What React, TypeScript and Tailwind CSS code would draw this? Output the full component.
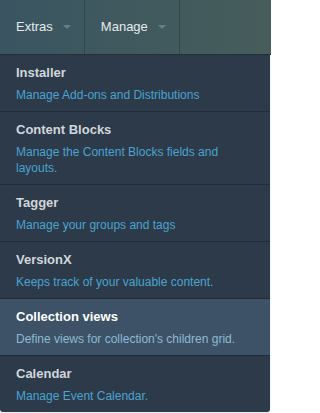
import React from 'react'

const items = [
  { title: 'Installer', desc: 'Manage Add-ons and Distributions' },
  { title: 'Content Blocks', desc: 'Manage the Content Blocks fields and layouts.' },
  { title: 'Tagger', desc: 'Manage your groups and tags' },
  { title: 'VersionX', desc: 'Keeps track of your valuable content.' },
  { title: 'Collection views', desc: "Define views for collection's children grid.", active: true },
  { title: 'Calendar', desc: 'Manage Event Calendar.' },
]

function Caret() {
  return (
    <span className="ml-[10px] inline-block h-0 w-0 border-x-4 border-t-4 border-x-transparent border-t-[#62808a]" />
  )
}

export default function App() {
  return (
    <div className="h-[413px] w-[271px] bg-[#f2f3f4] font-['Liberation_Sans',Arial,sans-serif]">
      {/* Top bar */}
      <div className="flex h-[55px] border-b border-[#22303a] bg-gradient-to-r from-[#3a5561] to-[#465d5b]">
        <div className="flex items-center border-r border-[#2f4751] pl-4 pr-[13px] text-[13px] text-[#e6eaec]">
          Extras
          <Caret />
        </div>
        <div className="flex items-center border-r border-[#2f4751] pl-4 pr-[13px] text-[13px] text-[#e6eaec]">
          Manage
          <Caret />
        </div>
      </div>

      {/* Dropdown */}
      <div className="w-[270px] overflow-hidden rounded-b-[3px] bg-[#2c3a4a]">
        {items.map((item, i) => (
          <div
            key={item.title}
            className={`px-4 pb-2 pt-[10px] ${i > 0 ? 'border-t border-[#212c39]' : ''} ${item.active ? 'bg-[#3d5267]' : ''}`}
          >
            <div className={`text-[13px] font-bold leading-4 ${item.active ? 'text-white' : 'text-[#d2d7dc]'}`}>
              {item.title}
            </div>
            <div className={`mt-[6px] text-[12px] leading-4 ${item.active ? 'text-[#8dbad4]' : 'text-[#4ba4cf]'}`}>
              {item.desc}
            </div>
          </div>
        ))}
      </div>
    </div>
  )
}
